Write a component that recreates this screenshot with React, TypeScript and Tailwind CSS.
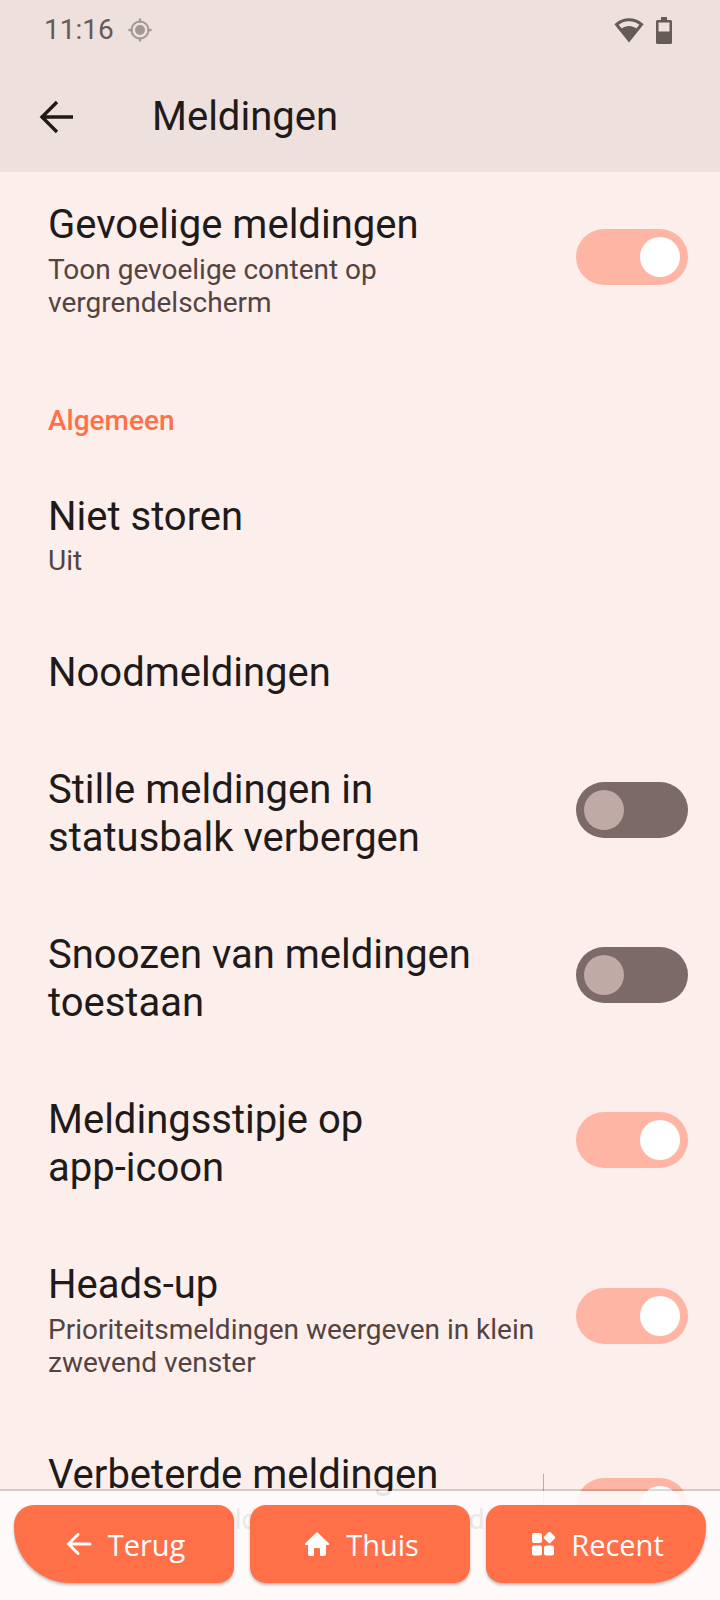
import React from "react";

const TITLE = "text-[40px] leading-[48px] text-[#201a19]";
const SUB = "text-[28px] leading-[33px] text-[#534341]";

function Toggle({ on }: { on: boolean }) {
  if (on) {
    return (
      <div className="w-[112px] h-[56px] shrink-0 rounded-full bg-[#ffb5a3] flex items-center justify-end pr-2">
        <div className="w-10 h-10 rounded-full bg-white" />
      </div>
    );
  }
  return (
    <div className="w-[112px] h-[56px] shrink-0 rounded-full bg-[#7c6a66] flex items-center pl-2">
      <div className="w-10 h-10 rounded-full bg-[#bfaaa5]" />
    </div>
  );
}

function Row({
  title,
  sub,
  subGap = "mt-[3px]",
  on,
  className,
}: {
  title: React.ReactNode;
  sub?: string;
  subGap?: string;
  on?: boolean;
  className?: string;
}) {
  return (
    <div className={"flex justify-between pl-[48px] pr-[32px] " + className}>
      <div className="flex-1 pr-[32px] pt-[2px]">
        <div className={TITLE}>{title}</div>
        {sub && <div className={SUB + " " + subGap}>{sub}</div>}
      </div>
      {on !== undefined && (
        <div className="shrink-0 mb-[6px]">
          <Toggle on={on} />
        </div>
      )}
    </div>
  );
}

function NavButton({
  label,
  icon,
  radius,
}: {
  label: string;
  icon: React.ReactNode;
  radius: string;
}) {
  return (
    <div
      className={
        "flex-1 h-[78px] pl-[3px] bg-[#ff7049] flex items-center justify-center gap-[16px] text-white text-[29px] font-medium shadow-[0_2px_3px_rgba(0,0,0,0.25)] " +
        radius
      }
    >
      {icon}
      <span className="font-['Open_Sans',sans-serif] pt-[2px]">{label}</span>
    </div>
  );
}

export default function App() {
  return (
    <div className="relative w-[720px] h-[1600px] overflow-hidden bg-[#fceeeb] font-['Roboto',sans-serif]">
      {/* Status bar */}
      <div className="h-[172px] bg-[#eee0dd]">
        <div className="h-[60px] flex items-center justify-between pl-[44px] pr-[48px]">
          <div className="flex items-center gap-[14px]">
            <span className="text-[28px] text-[#655b58]">11:16</span>
            <svg width="24" height="24" viewBox="0 0 24 24" className="text-[#a39895]">
              <circle cx="12" cy="12" r="8.5" fill="none" stroke="currentColor" strokeWidth="2" />
              <circle cx="12" cy="12" r="5" fill="currentColor" />
              <path d="M12 0.5v4M12 19.5v4M0.5 12h4M19.5 12h4" stroke="currentColor" strokeWidth="2.4" />
            </svg>
          </div>
          <div className="flex items-center gap-[12px]">
            <svg width="30" height="26" viewBox="0 0 30 26">
              <path
                fill="none"
                stroke="#655b58"
                strokeWidth="3"
                d="M2.5 7.5C10 1.2 20 1.2 27.5 7.5L15 23z"
              />
              <path fill="#655b58" d="M7.5 11.5C11.5 8 18.5 8 22.5 11.5L15 24.5z" />
            </svg>
            <svg width="16" height="27" viewBox="0 0 16 27">
              <path fill="#655b58" d="M5 0h6v3h3.5q1.5 0 1.5 1.5v21q0 1.5-1.5 1.5h-13Q0 27 0 25.500v-21Q0 3 1.500 3H5z" />
              <rect x="2.500" y="5.500" width="11" height="9" fill="#eee0dd" />
            </svg>
          </div>
        </div>
        {/* Toolbar */}
        <div className="flex items-center h-[112px] pt-[2px]">
          <svg width="36" height="36" viewBox="0 0 36 36" fill="none" className="ml-[39px]">
            <path d="M34 18H4M18 3L3 18l15 15" stroke="#201a19" strokeWidth="3.4" />
          </svg>
          <span className="ml-[77px] text-[40px] text-[#201a19]">Meldingen</span>
        </div>
      </div>

      {/* Settings list */}
      <Row
        title="Gevoelige meldingen"
        sub="Toon gevoelige content op vergrendelscherm"
        subGap="mt-[4px]"
        on
        className="pt-[27px] [&>div:last-child]:mt-[30px]"
      />
      <div className="pl-[48px] mt-[86px] text-[28px] leading-[32px] font-medium text-[#ff7049]">
        Algemeen
      </div>
      <Row title="Niet storen" sub="Uit" className="pt-[54px]" />
      <Row title="Noodmeldingen" className="pt-[70px]" />
      <Row title="Stille meldingen in statusbalk verbergen" on={false} className="pt-[67px] items-center" />
      <Row title="Snoozen van meldingen toestaan" on={false} className="pt-[67px] items-center" />
      <Row
        title={
          <>
            Meldingsstipje op <span className="whitespace-nowrap">app-icoon</span>
          </>
        }
        on
        className="pt-[67px] items-center"
      />
      <Row
        title="Heads-up"
        sub="Prioriteitsmeldingen weergeven in klein zwevend venster"
        subGap="mt-[4px]"
        on
        className="pt-[67px] items-center"
      />
      <div className="flex justify-between pl-[48px] pr-[32px] pt-[70px]">
        <div className="w-[495px] pt-[2px]">
          <div className={TITLE + " whitespace-nowrap"}>Verbeterde meldingen</div>
          <div className={SUB + " mt-[4px]"}>Krijg voorgestelde acties, antwoorden en meer</div>
        </div>
        <div className="flex items-start pt-[25px]">
          <div className="w-[1px] h-[64px] bg-[#b9aeab] -ml-[1px]" />
          <div className="ml-[32px] mt-[4px]">
            <Toggle on />
          </div>
        </div>
      </div>

      {/* Navigation overlay */}
      <div className="absolute left-0 right-0 bottom-0 h-[111px] bg-[#fdfbfb]/90 bg-clip-padding border-t-2 border-black/15 flex gap-[16px] px-[14px] pt-[14px]">
        <NavButton
          label="Terug"
          radius="rounded-tl-[20px] rounded-tr-[16px] rounded-br-[16px] rounded-bl-[56px]"
          icon={
            <svg width="26" height="24" viewBox="0 0 26 24" fill="none">
              <path d="M24 12H3M12 2.500L2.500 12l9.500 9.500" stroke="white" strokeWidth="3" strokeLinecap="round" strokeLinejoin="round" />
            </svg>
          }
        />
        <NavButton
          label="Thuis"
          radius="rounded-[16px]"
          icon={
            <svg width="26" height="26" viewBox="0 0 26 26">
              <path
                fill="white"
                d="M13 1L25 12.500q.6 1.500-1 1.500h-2v9q0 2-2 2h-3q-1 0-1-1v-6q0-1-1-1h-4q-1 0-1 1v6q0 1-1 1H6q-2 0-2-2v-9H2q-1.600 0-1-1.500z"
              />
            </svg>
          }
        />
        <NavButton
          label="Recent"
          radius="rounded-tl-[16px] rounded-tr-[20px] rounded-br-[56px] rounded-bl-[16px]"
          icon={
            <svg width="24" height="24" viewBox="0 0 24 24" fill="white">
              <rect x="1" y="1" width="10" height="10" rx="2" />
              <rect x="14" y="1" width="9" height="9" rx="1.500" transform="rotate(45 18.500 5.500)" />
              <rect x="1" y="13.500" width="10" height="10" rx="2" />
              <rect x="13" y="13.500" width="10" height="10" rx="2" />
            </svg>
          }
        />
      </div>
    </div>
  );
}
